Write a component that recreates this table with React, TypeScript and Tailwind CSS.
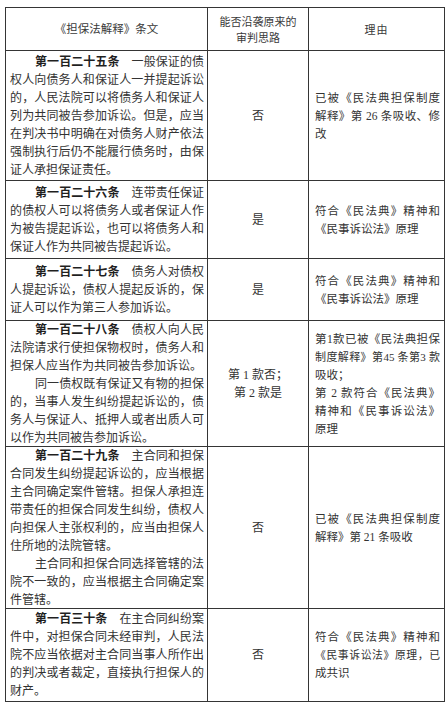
import React from "react";

type Line = { t: string; b?: string; indent?: boolean; last?: boolean; cls?: string };

const rows: { c1: Line[]; c2: string[]; c3: Line[] }[] = [
  {
    c1: [
      { b: "第一百二十五条", t: "　一般保证的债", indent: true },
      { t: "权人向债务人和保证人一并提起诉讼" },
      { t: "的，人民法院可以将债务人和保证人" },
      { t: "列为共同被告参加诉讼。但是，应当" },
      { t: "在判决书中明确在对债务人财产依法" },
      { t: "强制执行后仍不能履行债务时，由保" },
      { t: "证人承担保证责任。", last: true },
    ],
    c2: ["否"],
    c3: [
      { t: "已被《民法典担保制度" },
      { t: "解释》第 26 条吸收、修" },
      { t: "改", last: true },
    ],
  },
  {
    c1: [
      { b: "第一百二十六条", t: "　连带责任保证", indent: true },
      { t: "的债权人可以将债务人或者保证人作" },
      { t: "为被告提起诉讼，也可以将债务人和" },
      { t: "保证人作为共同被告提起诉讼。", last: true },
    ],
    c2: ["是"],
    c3: [
      { t: "符合《民法典》精神和" },
      { t: "《民事诉讼法》原理", last: true },
    ],
  },
  {
    c1: [
      { b: "第一百二十七条", t: "　债务人对债权", indent: true },
      { t: "人提起诉讼，债权人提起反诉的，保" },
      { t: "证人可以作为第三人参加诉讼。", last: true },
    ],
    c2: ["是"],
    c3: [
      { t: "符合《民法典》精神和" },
      { t: "《民事诉讼法》原理", last: true },
    ],
  },
  {
    c1: [
      { b: "第一百二十八条", t: "　债权人向人民", indent: true },
      { t: "法院请求行使担保物权时，债务人和" },
      { t: "担保人应当作为共同被告参加诉讼。", last: true },
      { t: "同一债权既有保证又有物的担保", indent: true },
      { t: "的，当事人发生纠纷提起诉讼的，债" },
      { t: "务人与保证人、抵押人或者出质人可" },
      { t: "以作为共同被告参加诉讼。", last: true },
    ],
    c2: ["第 1 款否；", "第 2 款是"],
    c3: [
      { t: "第1款已被《民法典担保" },
      { t: "制度解释》第45 条第3 款", cls: "text-[11px]" },
      { t: "吸收；", last: true },
      { t: "第 2 款符合《民法典》" },
      { t: "精神和《民事诉讼法》" },
      { t: "原理", last: true },
    ],
  },
  {
    c1: [
      { b: "第一百二十九条", t: "　主合同和担保", indent: true },
      { t: "合同发生纠纷提起诉讼的，应当根据" },
      { t: "主合同确定案件管辖。担保人承担连" },
      { t: "带责任的担保合同发生纠纷，债权人" },
      { t: "向担保人主张权利的，应当由担保人" },
      { t: "住所地的法院管辖。", last: true },
      { t: "主合同和担保合同选择管辖的法", indent: true },
      { t: "院不一致的，应当根据主合同确定案" },
      { t: "件管辖。", last: true },
    ],
    c2: ["否"],
    c3: [
      { t: "已被《民法典担保制度" },
      { t: "解释》第 21 条吸收", last: true },
    ],
  },
  {
    c1: [
      { b: "第一百三十条", t: "　在主合同纠纷案", indent: true },
      { t: "件中，对担保合同未经审判，人民法" },
      { t: "院不应当依据对主合同当事人所作出" },
      { t: "的判决或者裁定，直接执行担保人的" },
      { t: "财产。", last: true },
    ],
    c2: ["否"],
    c3: [
      { t: "符合《民法典》精神和" },
      { t: "《民事诉讼法》原理，已", cls: "text-[10.8px]" },
      { t: "成共识", last: true },
    ],
  },
];

function TextLine({ l }: { l: Line }) {
  return (
    <div
      className={`${l.last ? "text-left" : "text-justify [text-align-last:justify]"} ${
        l.indent ? "pl-[25px]" : ""
      } ${l.cls ?? ""}`}
    >
      {l.b && <span className="font-bold text-[#1f1f1f]">{l.b}</span>}
      {l.t}
    </div>
  );
}

const cellBase = "border-r border-b border-[#353535] flex items-center";

export default function App() {
  return (
    <div className="w-[447px] h-[707px] bg-white pt-[7px] pl-[5px] overflow-hidden">
      <div className="w-[440px] grid grid-cols-[202px_101px_136px] grid-rows-[43px_130px_78px_62px_126px_162px_93px] border-l border-t border-[#353535] font-['Liberation_Serif','Noto_Sans_CJK_SC',serif] text-[#333333]">
        {/* header */}
        <div className={`${cellBase} justify-center font-['Noto_Sans_CJK_SC',sans-serif] text-[11.5px] text-[#3a3a3a]`}>
          《担保法解释》条文
        </div>
        <div className={`${cellBase} justify-center text-center font-['Noto_Sans_CJK_SC',sans-serif] text-[11px] leading-[16px] text-[#3a3a3a]`}>
          <div>
            <div>能否沿袭原来的</div>
            <div>审判思路</div>
          </div>
        </div>
        <div className={`${cellBase} justify-center font-['Noto_Sans_CJK_SC',sans-serif] text-[11px] tracking-[1px] text-[#3a3a3a]`}>
          理由
        </div>

        {rows.map((r, i) => (
          <React.Fragment key={i}>
            <div className={`${cellBase} pl-[4px] pr-[3px] text-[12px] leading-[18px]`}>
              <div className="w-full">
                {r.c1.map((l, j) => (
                  <TextLine key={j} l={l} />
                ))}
              </div>
            </div>
            <div className={`${cellBase} justify-center text-center text-[12px] leading-[18px]`}>
              <div>
                {r.c2.map((s, j) => (
                  <div key={j}>{s}</div>
                ))}
              </div>
            </div>
            <div className={`${cellBase} pl-[6px] pr-[4px] text-[11.5px] leading-[18px]`}>
              <div className="w-full">
                {r.c3.map((l, j) => (
                  <TextLine key={j} l={l} />
                ))}
              </div>
            </div>
          </React.Fragment>
        ))}
      </div>
    </div>
  );
}
